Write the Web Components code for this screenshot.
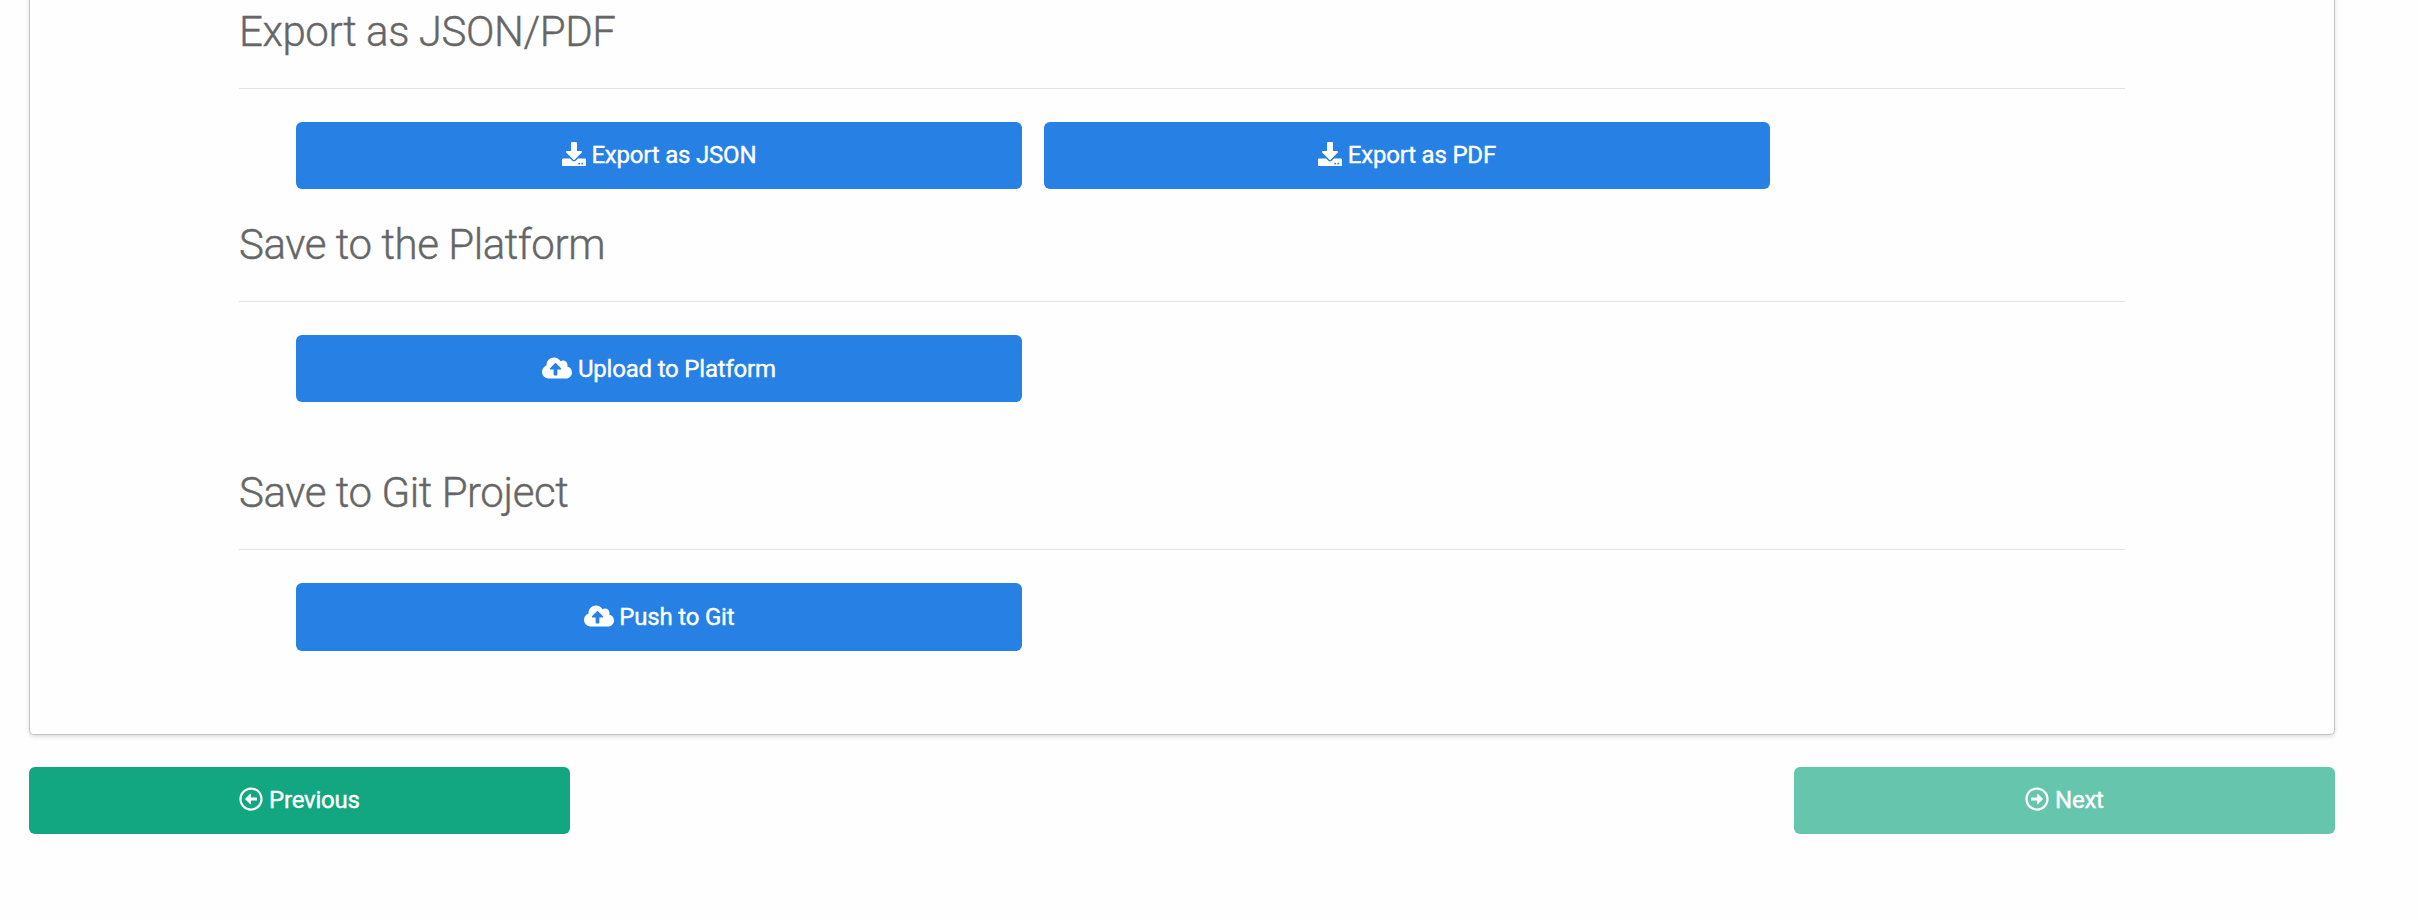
<!DOCTYPE html>
<html lang="en">
<head>
<meta charset="utf-8">
<title>Export</title>
<style>
  body { margin: 0; background: #fefefe; font-family: Roboto, "Liberation Sans", sans-serif; }
</style>
</head>
<body>
<export-page></export-page>
<script>
const ICONS = {
  download: [512, 'M216 0h80c13.3 0 24 10.7 24 24v168h87.7c17.8 0 26.7 21.5 14.1 34.1L269.7 378.3c-7.5 7.5-19.8 7.5-27.3 0L90.1 226.1c-12.6-12.6-3.7-34.1 14.1-34.1H192V24c0-13.3 10.7-24 24-24zm296 376v112c0 13.3-10.7 24-24 24H24c-13.3 0-24-10.7-24-24V376c0-13.3 10.7-24 24-24h146.7l49 49c20.1 20.1 52.5 20.1 72.6 0l49-49H488c13.3 0 24 10.7 24 24zm-124 88c0-11-9-20-20-20s-20 9-20 20 9 20 20 20 20-9 20-20zm64 0c0-11-9-20-20-20s-20 9-20 20 9 20 20 20 20-9 20-20z'],
  cloud: [640, 'M537.6 226.6c4.1-10.7 6.4-22.4 6.4-34.6 0-53-43-96-96-96-19.7 0-38.1 6-53.3 16.2C367 64.2 315.3 32 256 32c-88.4 0-160 71.6-160 160 0 2.7.1 5.4.2 8.1C40.2 219.8 0 273.2 0 336c0 79.5 64.5 144 144 144h368c70.7 0 128-57.3 128-128 0-61.9-44-113.6-102.4-125.4zM393.4 288H328v112c0 8.8-7.2 16-16 16h-48c-8.8 0-16-7.2-16-16V288h-65.4c-14.3 0-21.4-17.2-11.3-27.4l105.4-105.4c6.2-6.2 16.4-6.2 22.6 0l105.4 105.4c10.1 10.1 2.9 27.4-11.3 27.4z'],
  left: [512, 'M8 256c0 137 111 248 248 248s248-111 248-248S393 8 256 8 8 119 8 256zm448 0c0 110.5-89.5 200-200 200S56 366.5 56 256 145.5 56 256 56s200 89.5 200 200zm-72-20v40c0 6.6-5.4 12-12 12H256v67c0 10.7-12.9 16-20.5 8.5l-99-99c-4.7-4.7-4.7-12.3 0-17l99-99c7.6-7.6 20.5-2.2 20.5 8.5v67h116c6.6 0 12 5.4 12 12z']
};
ICONS.right = ICONS.left;

class UiIcon extends HTMLElement {
  connectedCallback() {
    const name = this.getAttribute('name');
    const [w, d] = ICONS[name];
    this.attachShadow({ mode: 'open' }).innerHTML = `
      <style>
        :host { display: inline-block; width: ${w / 512}em; height: 1em; vertical-align: -0.125em; }
        svg { display: block; width: 100%; height: 100%; }
      </style>
      <svg viewBox="0 0 ${w} 512" fill="currentColor" aria-hidden="true"><path ${name === 'right' ? 'transform="rotate(180 256 256)"' : ''} d="${d}"/></svg>`;
  }
}
customElements.define('ui-icon', UiIcon);

class UiButton extends HTMLElement {
  connectedCallback() {
    this.attachShadow({ mode: 'open' }).innerHTML = `
      <style>
        :host { display: block; height: 67px; }
        button { display: block; width: 100%; height: 100%; margin: 0; padding: 0 0 var(--lift, 0); border: 0; border-radius: 6px;
          background: #2780e3; color: #fff; font: 400 24px/36px Roboto, "Liberation Sans", sans-serif;
          letter-spacing: -0.2px; -webkit-text-stroke: 0.4px #fff; }
        :host([kind="success"]) button { background: #12a780; }
        :host([disabled]) button { background: #65c5ad; }
      </style>
      <button type="button"><ui-icon name="${this.getAttribute('icon')}"></ui-icon> <slot></slot></button>`;
  }
}
customElements.define('ui-button', UiButton);

class ExportSection extends HTMLElement {
  connectedCallback() {
    this.attachShadow({ mode: 'open' }).innerHTML = `
      <style>
        :host { display: block; }
        h2 { margin: 0; height: 56px; color: #666; font: 300 42px/56px Roboto, "Liberation Sans", sans-serif;
          letter-spacing: -0.43px; -webkit-text-stroke: 0.4px #666; }
        .rule { height: 1px; margin: 28px 0 33px; background: #e3e3e3; }
        .row { display: grid; grid-template-columns: 726px 726px; gap: 22px; padding-left: 57px; }
      </style>
      <h2>${this.getAttribute('heading')}</h2>
      <div class="rule"></div>
      <div class="row"><slot></slot></div>`;
  }
}
customElements.define('export-section', ExportSection);

class ExportPage extends HTMLElement {
  connectedCallback() {
    this.attachShadow({ mode: 'open' }).innerHTML = `
      <style>
        :host { display: flow-root; height: 922px; overflow: hidden; padding: 0 83px 0 29px; box-sizing: border-box; }
        .card { height: 741px; margin-top: -6px; box-sizing: border-box; padding: 10px 209px 0; background: #fefefe;
          border: 1px solid #c5c5c5; border-top: 0; border-radius: 0 0 5px 5px; box-shadow: 0 2px 4px rgba(0,0,0,.13); }
        export-section + export-section { margin-top: 28px; }
        export-section.last { margin-top: 63px; }
        export-section.last ui-button { height: 68px; }
        .first, nav { --lift: 2px; }
        nav { display: flex; justify-content: space-between; margin-top: 32px; }
        nav ui-button { width: 541px; }
      </style>
      <div class="card">
        <export-section class="first" heading="Export as JSON/PDF">
          <ui-button icon="download">Export as JSON</ui-button>
          <ui-button icon="download">Export as PDF</ui-button>
        </export-section>
        <export-section heading="Save to the Platform">
          <ui-button icon="cloud">Upload to Platform</ui-button>
        </export-section>
        <export-section class="last" heading="Save to Git Project">
          <ui-button icon="cloud">Push to Git</ui-button>
        </export-section>
      </div>
      <nav>
        <ui-button kind="success" icon="left">Previous</ui-button>
        <ui-button kind="success" disabled icon="right">Next</ui-button>
      </nav>`;
  }
}
customElements.define('export-page', ExportPage);
</script>
</body>
</html>
